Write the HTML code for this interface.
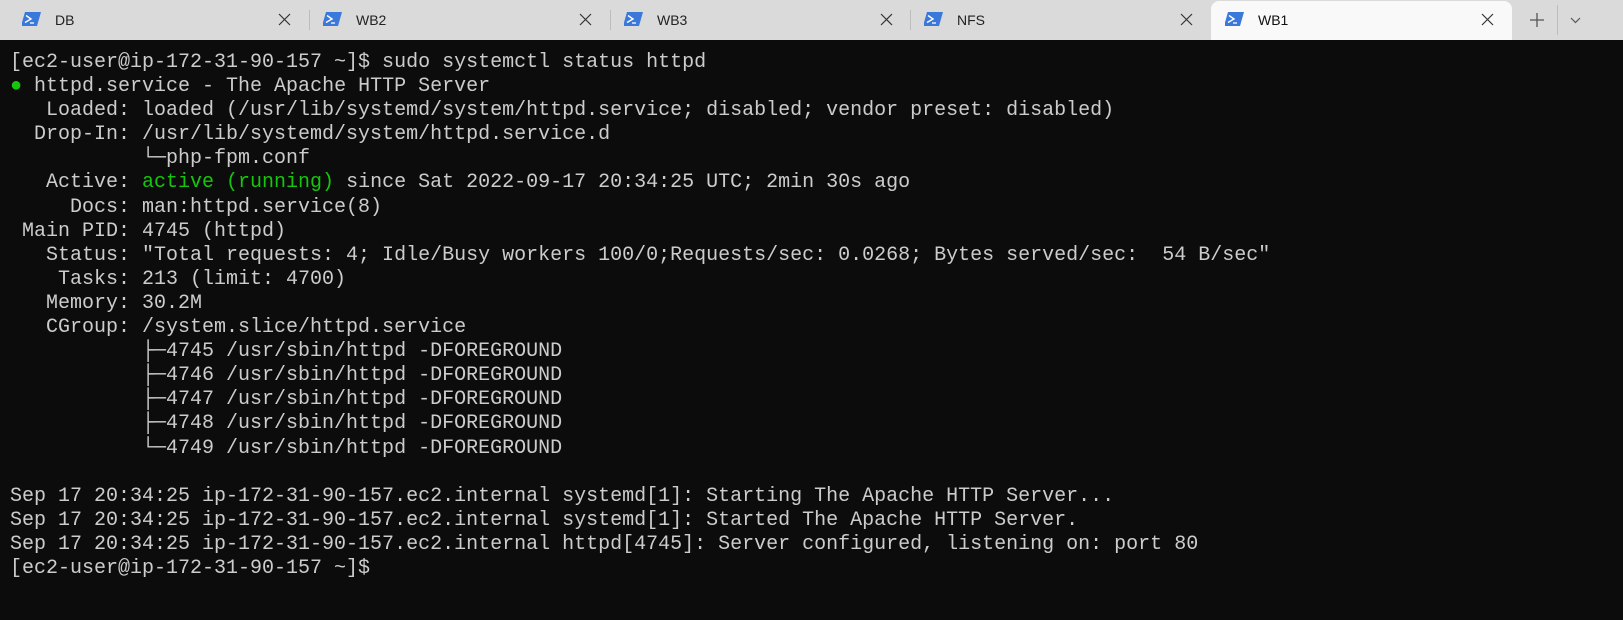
<!DOCTYPE html>
<html><head><meta charset="utf-8"><style>
body{margin:0;width:1623px;height:620px;background:#0c0c0c;overflow:hidden;position:relative}
.bar{position:absolute;left:0;top:0;width:1623px;height:40px;background:#dadada}
.tab{position:absolute;top:0;height:40px;width:301px;font:14px "Liberation Sans",sans-serif;color:#222}
.tab .ic{position:absolute;left:14px;top:12px}
.tab .t{position:absolute;left:47px;top:12px}
.tab .x{position:absolute;right:18px;top:13px}
.sep{position:absolute;top:10px;width:1px;height:20px;background:#bdbdbd}
.act{background:#f9f9f9;top:1px;height:39px;border-radius:8px 8px 0 0;width:301px}
.act .t{top:11px;color:#111}
pre{position:absolute;left:10px;top:51px;margin:0;font:20px/24.1px "Liberation Mono","DejaVu Sans Mono",monospace;color:#cccccc}
.g{color:#16c60c}
</style></head><body>
<div class="bar"></div>
<svg width="0" height="0" style="position:absolute"><defs>
<g id="ps"><path d="M3 0H19L15 14H-1Z" fill="#3a78d9"/><path d="M4 3.5L9 7L3 10.5" stroke="#fff" stroke-width="1.4" fill="none"/><path d="M8 11H12" stroke="#fff" stroke-width="1.3"/></g>
<g id="x"><path d="M1 1L12 12M12 1L1 12" stroke="#333" stroke-width="1.2"/></g></defs></svg>
<div class="tab" style="left:8px"><svg class="ic" width="20" height="15"><use href="#ps"/></svg><span class="t">DB</span><svg class="x" width="13" height="13"><use href="#x"/></svg></div>
<div class="sep" style="left:309px"></div>
<div class="tab" style="left:309px"><svg class="ic" width="20" height="15"><use href="#ps"/></svg><span class="t">WB2</span><svg class="x" width="13" height="13"><use href="#x"/></svg></div>
<div class="sep" style="left:610px"></div>
<div class="tab" style="left:610px"><svg class="ic" width="20" height="15"><use href="#ps"/></svg><span class="t">WB3</span><svg class="x" width="13" height="13"><use href="#x"/></svg></div>
<div class="sep" style="left:910px"></div>
<div class="tab" style="left:910px"><svg class="ic" width="20" height="15"><use href="#ps"/></svg><span class="t">NFS</span><svg class="x" width="13" height="13"><use href="#x"/></svg></div>
<div class="tab act" style="left:1211px"><svg class="ic" width="20" height="15" style="top:11px"><use href="#ps"/></svg><span class="t">WB1</span><svg class="x" width="13" height="13" style="top:12px"><use href="#x"/></svg></div>
<svg style="position:absolute;left:1530px;top:13px" width="14" height="14"><path d="M7 0V14M0 7H14" stroke="#555" stroke-width="1.3"/></svg>
<div class="sep" style="left:1557px;top:5px;height:30px"></div>
<svg style="position:absolute;left:1570px;top:17px" width="11" height="7"><path d="M1 1L5.5 5.5L10 1" stroke="#555" stroke-width="1.2" fill="none"/></svg>
<pre>[ec2-user@ip-172-31-90-157 ~]$ sudo systemctl status httpd
<span class="g">●</span> httpd.service - The Apache HTTP Server
   Loaded: loaded (/usr/lib/systemd/system/httpd.service; disabled; vendor preset: disabled)
  Drop-In: /usr/lib/systemd/system/httpd.service.d
           └─php-fpm.conf
   Active: <span class="g">active (running)</span> since Sat 2022-09-17 20:34:25 UTC; 2min 30s ago
     Docs: man:httpd.service(8)
 Main PID: 4745 (httpd)
   Status: "Total requests: 4; Idle/Busy workers 100/0;Requests/sec: 0.0268; Bytes served/sec:  54 B/sec"
    Tasks: 213 (limit: 4700)
   Memory: 30.2M
   CGroup: /system.slice/httpd.service
           ├─4745 /usr/sbin/httpd -DFOREGROUND
           ├─4746 /usr/sbin/httpd -DFOREGROUND
           ├─4747 /usr/sbin/httpd -DFOREGROUND
           ├─4748 /usr/sbin/httpd -DFOREGROUND
           └─4749 /usr/sbin/httpd -DFOREGROUND

Sep 17 20:34:25 ip-172-31-90-157.ec2.internal systemd[1]: Starting The Apache HTTP Server...
Sep 17 20:34:25 ip-172-31-90-157.ec2.internal systemd[1]: Started The Apache HTTP Server.
Sep 17 20:34:25 ip-172-31-90-157.ec2.internal httpd[4745]: Server configured, listening on: port 80
[ec2-user@ip-172-31-90-157 ~]$</pre>
</body></html>
